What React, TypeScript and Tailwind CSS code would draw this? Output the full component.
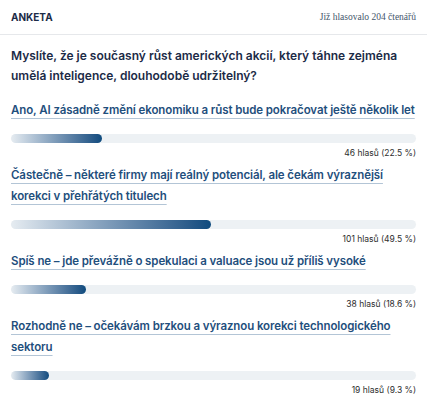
import React from 'react';

type Option = {
  label: string;
  votes: number;
  percent: number;
};

const options: Option[] = [
  { label: 'Ano, AI zásadně změní ekonomiku a růst bude pokračovat ještě několik let', votes: 46, percent: 22.5 },
  { label: 'Částečně – některé firmy mají reálný potenciál, ale čekám výraznější korekci v přehřátých titulech', votes: 101, percent: 49.5 },
  { label: 'Spíš ne – jde převážně o spekulaci a valuace jsou už příliš vysoké', votes: 38, percent: 18.6 },
  { label: 'Rozhodně ne – očekávám brzkou a výraznou korekci technologického sektoru', votes: 19, percent: 9.3 },
];

function PollOption({ option }: { option: Option }) {
  return (
    <div className="pb-[6px]">
      <div className="text-[11.5px] leading-[21px] tracking-[-0.1px] font-semibold">
        <a
          href="#"
          className="text-[#1f4f7d] underline decoration-[#b3c5d6] decoration-1 underline-offset-[4px]"
        >
          {option.label}
        </a>
      </div>
      <div className="mt-[13px] h-[9px] w-full rounded-full bg-[#edf1f4] overflow-hidden">
        <div
          className="h-full rounded-full bg-gradient-to-r from-[#e6ecf1] to-[#0e4b7e]"
          style={{ width: `${option.percent}%` }}
        />
      </div>
      <div className="mt-[4px] text-right text-[8.5px] leading-[12px] text-[#2d2d2d]">
        {option.votes} hlasů ({option.percent} %)
      </div>
    </div>
  );
}

export default function App() {
  return (
    <div className="w-[427px] h-[400px] overflow-hidden bg-white font-['Inter',sans-serif]">
      <div className="flex items-center justify-between h-[35px] px-[11px] border-b border-[#e6e8eb]">
        <span className="text-[10px] font-bold text-[#1c2b47]">ANKETA</span>
        <span className="font-['Liberation_Serif',serif] text-[9.5px] text-[#44566b]">Již hlasovalo 204 čtenářů</span>
      </div>
      <div className="px-[11px] pt-[11px]">
        <h2 className="text-[12px] leading-[20px] font-semibold text-[#1c2b47]">
          Myslíte, že je současný růst amerických akcií, který táhne zejména umělá inteligence, dlouhodobě udržitelný?
        </h2>
        <div className="mt-[14px]">
          {options.map((o) => (
            <PollOption key={o.votes} option={o} />
          ))}
        </div>
      </div>
    </div>
  );
}
